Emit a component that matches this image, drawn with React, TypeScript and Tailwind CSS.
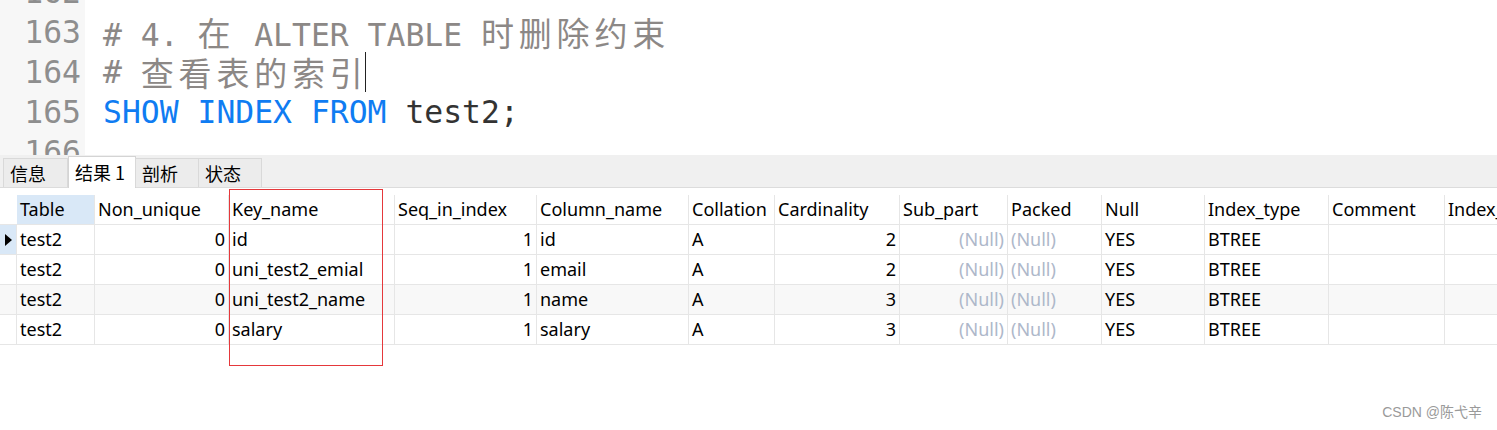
import React from "react";

const mono = { fontFamily: '"DejaVu Sans Mono", "Noto Sans CJK SC", monospace' };

// CJK glyphs take two monospace cells in the editor
const Cjk = ({ children }: { children: React.ReactNode }) => (
  <span className="text-[33px] tracking-[4.8px]" style={{ fontFamily: '"Noto Sans CJK SC", sans-serif' }}>
    {children}
  </span>
);

type Col = { name: string; w: number; right?: boolean };

const columns: Col[] = [
  { name: "Table", w: 78 },
  { name: "Non_unique", w: 134, right: true },
  { name: "Key_name", w: 166 },
  { name: "Seq_in_index", w: 142, right: true },
  { name: "Column_name", w: 152 },
  { name: "Collation", w: 86 },
  { name: "Cardinality", w: 125, right: true },
  { name: "Sub_part", w: 108, right: true },
  { name: "Packed", w: 94 },
  { name: "Null", w: 103 },
  { name: "Index_type", w: 124 },
  { name: "Comment", w: 116 },
  { name: "Index_comment", w: 140 },
];

const rows: (string | null)[][] = [
  ["test2", "0", "id", "1", "id", "A", "2", null, null, "YES", "BTREE", "", ""],
  ["test2", "0", "uni_test2_emial", "1", "email", "A", "2", null, null, "YES", "BTREE", "", ""],
  ["test2", "0", "uni_test2_name", "1", "name", "A", "3", null, null, "YES", "BTREE", "", ""],
  ["test2", "0", "salary", "1", "salary", "A", "3", null, null, "YES", "BTREE", "", ""],
];

const tabs = ["信息", "结果 1", "剖析", "状态"];
const tabWidths = [65, 68, 64, 64];

export default function App() {
  return (
    <div className="relative w-[1497px] h-[430px] overflow-hidden bg-white">
      {/* Editor */}
      <div className="flex h-[155px] overflow-hidden text-[31.4px]" style={mono}>
        <div className="w-[85px] shrink-0 bg-[#f7f7f7] text-[#8e8e8e] text-right pr-[4px]">
          <div className="-mt-[28px]">
            {["162", "163", "164", "165", "166"].map((n) => (
              <div key={n} className="h-[40px] leading-[40px]">{n}</div>
            ))}
          </div>
        </div>
        <div className="pl-[18px] whitespace-pre">
          <div className="-mt-[28px]">
            <div className="h-[40px] leading-[40px]"> </div>
            <div className="h-[40px] leading-[40px] text-[#8c8886]">
              # 4. <Cjk>在</Cjk> ALTER TABLE <Cjk>时删除约束</Cjk>
            </div>
            <div className="h-[40px] leading-[40px] text-[#8c8886] flex items-center">
              <span># </span>
              <Cjk>查看表的索引</Cjk>
              <span className="inline-block w-px h-[40px] bg-[#222] -ml-[3px]" />
            </div>
            <div className="h-[40px] leading-[40px]">
              <span className="text-[#0f7cf2]">SHOW INDEX FROM</span>
              <span className="text-[#333]"> test2;</span>
            </div>
            <div className="h-[40px] leading-[40px]"> </div>
          </div>
        </div>
      </div>

      {/* Result tabs */}
      <div
        className="flex items-end h-[33px] bg-[#f0f0f0] pl-[3px] border-b border-[#dcdcdc]"
        style={{ fontFamily: '"Noto Sans CJK SC", sans-serif' }}
      >
        {tabs.map((t, i) => (
          <div
            key={t}
            style={{ width: tabWidths[i] }}
            className={
              i === 1
                ? "h-[32px] -mb-px bg-white border border-b-0 border-[#d4d4d4] text-[18px] text-black pl-[6px] flex items-center"
                : "h-[29px] bg-[#ececec] border border-b-0 border-[#d9d9d9] -ml-px first:ml-0 text-[18px] text-black pl-[6px] flex items-center"
            }
          >
            {t}
          </div>
        ))}
      </div>

      {/* Grid */}
      <div className="pt-[7px] text-[18px] text-black" style={{ fontFamily: '"Noto Sans", sans-serif' }}>
        <div className="flex h-[30px] border-b border-[#e6e6e6]">
          <div className="w-[17px] shrink-0" />
          {columns.map((c, i) => (
            <div
              key={c.name}
              style={{ width: c.w }}
              className={
                (i === 0 ? "bg-[#d9e8f7] " : "") +
                "shrink-0 border-r border-[#e6e6e6] pl-[3px] flex items-center whitespace-nowrap overflow-hidden"
              }
            >
              {c.name}
            </div>
          ))}
        </div>
        {rows.map((r, ri) => (
          <div
            key={ri}
            className={(ri === 2 ? "bg-[#f8f8f8] " : "") + "flex h-[30px] border-b border-[#e6e6e6]"}
          >
            <div
              className={
                (ri === 0 ? "bg-[#d9e8f7] " : "") +
                "w-[17px] shrink-0 border-r border-[#e6e6e6] flex items-center justify-center"
              }
            >
              {ri === 0 && (
                <svg width="7" height="12" viewBox="0 0 7 12">
                  <path d="M0 0 L7 6 L0 12 Z" fill="#000" />
                </svg>
              )}
            </div>
            {r.map((v, ci) => {
              const c = columns[ci];
              return (
                <div
                  key={ci}
                  style={{ width: c.w }}
                  className={
                    "shrink-0 border-r border-[#e6e6e6] flex items-center whitespace-nowrap overflow-hidden px-[3px] " +
                    (c.right ? "justify-end" : "justify-start")
                  }
                >
                  {v === null ? <span className="text-[#aeb8ca]">(Null)</span> : v}
                </div>
              );
            })}
          </div>
        ))}
      </div>

      {/* Red highlight box */}
      <div className="absolute left-[229px] top-[189px] w-[154px] h-[177px] border border-[#e5383b] pointer-events-none" />

      {/* Watermark */}
      <div
        className="absolute right-[15px] bottom-[7px] text-[14px] text-[#9a9a9a]"
        style={{ fontFamily: '"Liberation Sans", "Noto Sans CJK SC", sans-serif' }}
      >
        CSDN @陈弋辛
      </div>
    </div>
  );
}
